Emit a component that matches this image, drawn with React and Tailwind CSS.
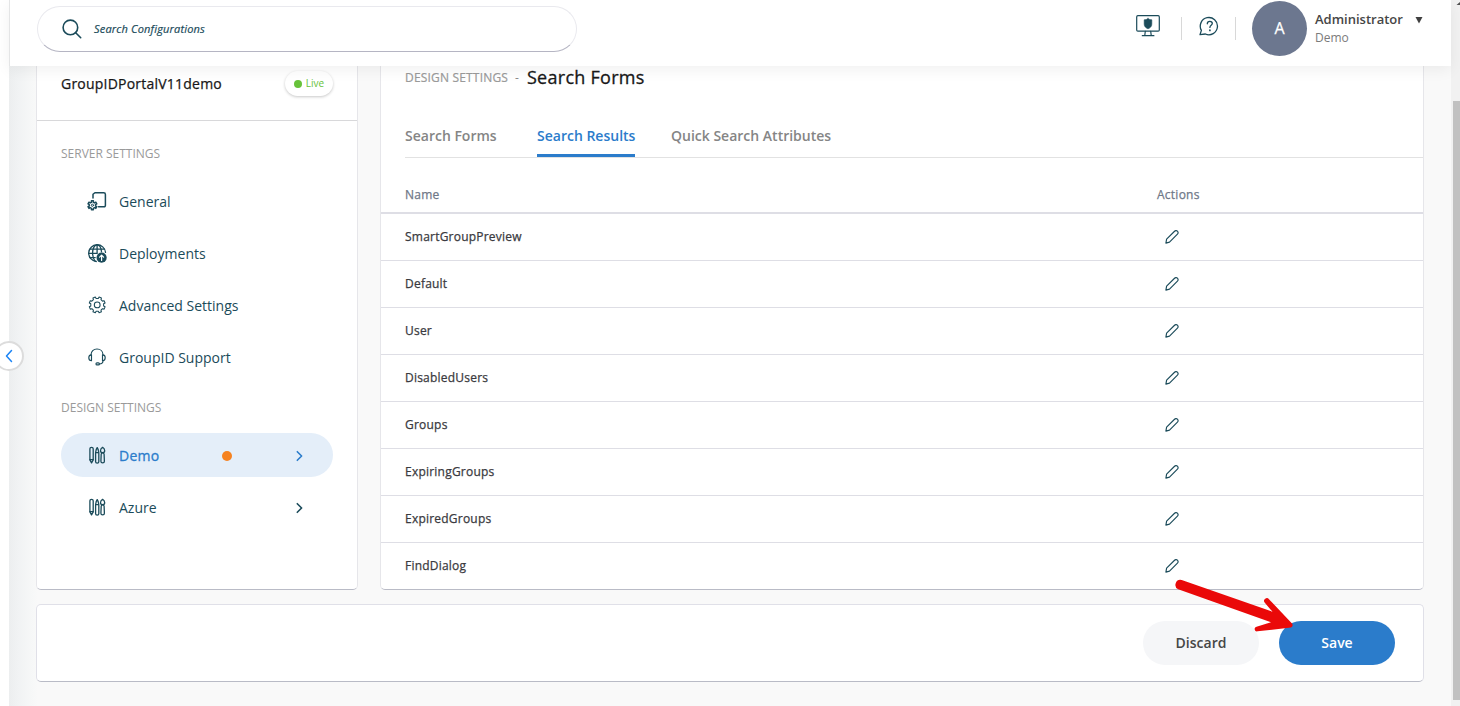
import React from "react";

const stroke = {
  fill: "none",
  stroke: "currentColor",
  strokeLinecap: "round",
  strokeLinejoin: "round",
};

// Closed outline of a cog: each tooth is four points, alternating outer and inner radius.
function cogPath(cx, cy, teeth, outer, inner, phase) {
  const step = 360 / teeth;
  const points = [];
  for (let i = 0; i < teeth; i++) {
    const mid = phase + i * step;
    [
      [-0.29, inner],
      [-0.2, outer],
      [0.2, outer],
      [0.29, inner],
    ].forEach(([offset, r]) => {
      const a = ((mid + offset * step) * Math.PI) / 180;
      points.push(`${(cx + r * Math.cos(a)).toFixed(2)} ${(cy + r * Math.sin(a)).toFixed(2)}`);
    });
  }
  return `M${points.join("L")}Z`;
}

const SMALL_COG = cogPath(5.4, 14.3, 6, 4.6, 3.2, 90);
const LARGE_COG = cogPath(10.2, 9.9, 8, 8.1, 6.5, 22.5);

function SearchIcon() {
  return (
    <svg width="20" height="20" viewBox="0 0 20 20" {...stroke} strokeWidth="1.6">
      <circle cx="8.4" cy="8.4" r="7.3" />
      <path d="M13.7 13.7l5 5" />
    </svg>
  );
}

function MonitorIcon() {
  return (
    <svg width="24" height="22" viewBox="0 0 24 22" {...stroke} strokeWidth="1.2">
      <rect x="0.7" y="0.7" width="22.6" height="15.4" rx="1.2" />
      <path d="M9.3 16.3l-.5 4M14.7 16.3l.5 4M6.3 20.7h11.6" />
      <path
        d="M12 3.6c1.100.8 2.300 1.200 3.800 1.200v4.300c0 2.400-1.600 3.900-3.800 4.700-2.200-.8-3.800-2.300-3.800-4.700V4.800c1.500 0 2.700-.4 3.800-1.200z"
        fill="currentColor"
        strokeWidth="0.6"
      />
    </svg>
  );
}

function HelpIcon() {
  return (
    <svg width="20" height="20" viewBox="0 0 20 20" {...stroke} strokeWidth="1.3">
      <path d="M1 18.600l1.400-4.200A8.600 8.600 0 1 1 6.400 18z" />
      <path d="M8.300 7.800c0-1.500 1-2.500 2.500-2.500s2.500.9 2.500 2.200c0 1.700-2.400 1.900-2.400 3.900" />
      <path d="M10.900 14.200v.3" strokeWidth="1.700" />
    </svg>
  );
}

function GeneralIcon() {
  return (
    <svg width="20" height="20" viewBox="0 0 20 20" {...stroke} strokeWidth="1.500">
      <path d="M6 7V3.300L7.900 1.700h8.800a1.700 1.700 0 0 1 1.700 1.700v11.200a1.200 1.200 0 0 1-1.200 1.200h-5.700" />
      <path d={SMALL_COG} />
      <circle cx="5.400" cy="14.300" r="1.100" strokeWidth="1" />
    </svg>
  );
}

function DeploymentsIcon() {
  return (
    <svg width="20" height="20" viewBox="-0.5 -0.4 20 20" {...stroke} strokeWidth="1.300">
      <path d="M8.800 18.100A8.400 8.400 0 1 1 18 9" />
      <path d="M7.700 18c-1.700-1.900-2.600-5-2.600-8.300 0-4.800 2-8.300 4.500-8.300 2.300 0 4 3 4.400 7" />
      <path d="M9.600 1.400v8.100M2.300 5.700h14.500M1.200 10h8.500M2.200 14.200h5.500" />
      <circle cx="14.100" cy="14.300" r="5.100" fill="currentColor" stroke="none" />
      <path d="M14.100 17v-5.100M12.100 13.700l2-2 2 2" stroke="white" strokeWidth="1.200" />
    </svg>
  );
}

function AdvancedIcon() {
  return (
    <svg width="20" height="20" viewBox="0 0 20 20" {...stroke} strokeWidth="1.050">
      <path d={LARGE_COG} />
      <circle cx="10.200" cy="9.900" r="2.900" />
    </svg>
  );
}

function SupportIcon() {
  return (
    <svg width="20" height="20" viewBox="0 0 20 20" {...stroke} strokeWidth="1.150">
      <path d="M4 8.300V7.800C4 4.400 6.600 2 10 2s6 2.400 6 5.800v.5" />
      <path d="M4.500 7.800c-1.800 0-2.700 1.200-2.700 2.900s.9 3 2.700 3zM15.500 7.800c1.800 0 2.700 1.200 2.700 2.900s-.9 3-2.700 3z" />
      <path d="M16 13.800c0 1.900-1.300 3.200-3.700 3.200" />
      <rect x="9" y="15.800" width="3.400" height="2.100" rx="1" />
    </svg>
  );
}

function DesignIcon() {
  return (
    <svg width="20" height="20" viewBox="-0.2 -0.4 20 20" {...stroke} strokeWidth="1.300">
      <path d="M2.700 3.300c0-1.900 3.300-1.900 3.300 0v11.200l-1.650 3-1.650-3z" />
      <path d="M2.800 14.300h3.100" />
      <path d="M8.400 7.500c0-1.500.6-2 .6-3.300L10 2.200l1 2c0 1.300.6 1.800.6 3.300v8.800c0 1.800-3.200 1.800-3.200 0zM8.400 7.300h3.200" />
      <path d="M15.400 1.900c1.500 1 2.100 2.100 2.100 3.400 0 1.100-.9 1.900-2.100 1.900s-2.100-.8-2.100-1.900c0-1.300.6-2.400 2.100-3.400z" />
      <path d="M14 8.900c0-1.900 2.900-1.900 2.900 0l.3 7c0 2.200-3.500 2.200-3.500 0z" />
    </svg>
  );
}

function PencilIcon() {
  return (
    <svg width="14" height="14" viewBox="0 0 14 14" {...stroke} strokeWidth="1.150">
      <path d="M.9 13.100l.7-3.900 7.700-7.700c1.100-1.100 2.300-1.100 3.100-.3s.9 2.100-.2 3.200l-7.700 7.700z" />
    </svg>
  );
}

function Chevron() {
  return (
    <svg className="mt-[2px]" width="8" height="12" viewBox="0.4 0 8 12" {...stroke} strokeWidth="1.600">
      <path d="M1.700 1.700L6 6l-4.300 4.300" />
    </svg>
  );
}

const serverItems = [
  { label: "General", Icon: GeneralIcon },
  { label: "Deployments", Icon: DeploymentsIcon },
  { label: "Advanced Settings", Icon: AdvancedIcon },
  { label: "GroupID Support", Icon: SupportIcon },
];

const rows = [
  "SmartGroupPreview",
  "Default",
  "User",
  "DisabledUsers",
  "Groups",
  "ExpiringGroups",
  "ExpiredGroups",
  "FindDialog",
];

function Header() {
  return (
    <header className="relative z-10 flex h-[66px] shrink-0 items-start border-l border-[#e4e5e6] bg-white pl-[27px] shadow-[0_4px_14px_rgba(0,0,0,0.06)]">
      <div className="mt-[6px] flex h-[46px] w-[540px] items-center rounded-full border border-[#e9e9ee] border-b-[#b5b5c3] pl-[24px] text-[#1b4b5a]">
        <SearchIcon />
        <span className="ml-3 text-[11px] tracking-[0.18px] italic [-webkit-text-stroke:0.2px]">Search Configurations</span>
      </div>
      <div className="ml-auto flex items-start pr-[28px] text-[#1b4b5a]">
        <div className="mt-[15px]"><MonitorIcon /></div>
        <div className="mt-[17px] ml-[21px] h-[23px] w-px bg-[#d8d8d8]" />
        <div className="mt-[16px] ml-[17px]"><HelpIcon /></div>
        <div className="mt-[17px] ml-[16px] h-[23px] w-px bg-[#d8d8d8]" />
        <div className="mt-px ml-[16px] flex size-[55px] items-center justify-center rounded-full bg-[#6c778f] pb-[2px] text-[16px] text-white [-webkit-text-stroke:0.25px]">
          A
        </div>
        <div className="mt-[10px] ml-[8px] w-[100px]">
          <div className="text-[13px] leading-[19px] font-semibold text-[#464646]">Administrator</div>
          <div className="text-[12px] leading-[18px] text-[#7b7b7b]">Demo</div>
        </div>
        <svg className="mt-[17px]" width="8" height="7" viewBox="0 0 8 7">
          <path d="M.5 0h7L4 6.500z" fill="#404040" />
        </svg>
      </div>
    </header>
  );
}

function Sidebar() {
  return (
    <aside className="w-[322px] shrink-0 rounded-b-[5px] border border-t-0 border-[#e6e6ea] border-b-[#b9bbc6] bg-white">
      <div className="flex h-[55px] items-start justify-between border-b border-[#d8d8da] pr-[24px] pl-[24px]">
        <span className="mt-[7px] text-[14px] leading-[22px] tracking-[0.22px] text-[#181818] [-webkit-text-stroke:0.25px]">GroupIDPortalV11demo</span>
        <span className="mt-[5px] flex h-[25px] w-[48px] items-center justify-center gap-1 rounded-full bg-white text-[10px] text-[#67c23a] shadow-[0_1px_3px_rgba(0,0,0,0.22)]">
          <i className="size-2 rounded-full bg-[#67c23a]" />
          Live
        </span>
      </div>
      <div className="px-[24px] pt-[24px] text-[#1b4b5a]">
        <h2 className="text-[12px] leading-[18px] text-[#9a9a9a]">SERVER SETTINGS</h2>
        <nav className="mt-[16px] flex flex-col gap-2">
          {serverItems.map(({ label, Icon }) => (
            <a key={label} className="flex h-[44px] items-center pl-[26px]">
              <Icon />
              <span className="ml-3 text-[14px]">{label}</span>
            </a>
          ))}
        </nav>
        <h2 className="mt-[20px] text-[12px] leading-[18px] text-[#9a9a9a]">DESIGN SETTINGS</h2>
        <nav className="mt-[16px] flex flex-col gap-2">
          <a className="flex h-[44px] items-center rounded-full bg-[#e4eef9] pl-[26px]">
            <DesignIcon />
            <span className="ml-3 w-[103px] text-[14px] tracking-[0.25px] text-[#2b7ccb] [-webkit-text-stroke:0.3px]">Demo</span>
            <i className="mt-[2px] size-[10px] rounded-full bg-[#f58220]" />
            <span className="mr-[29px] ml-auto text-[#2b7ccb]"><Chevron /></span>
          </a>
          <a className="flex h-[44px] items-center pl-[26px]">
            <DesignIcon />
            <span className="ml-3 text-[14px]">Azure</span>
            <span className="mr-[29px] ml-auto"><Chevron /></span>
          </a>
        </nav>
      </div>
    </aside>
  );
}

function Results() {
  return (
    <section className="flex-1 rounded-b-[5px] border border-t-0 border-[#e6e6ea] border-b-[#b9bbc6] bg-white">
      <div className="flex h-[49px] items-start pl-[24px] whitespace-pre">
        <span className="mt-[3px] text-[12px] leading-[18px] tracking-[0.18px] text-[#9a9a9a] [-webkit-text-stroke:0.2px]">DESIGN SETTINGS</span>
        <span className="mt-[3px] ml-[7px] text-[12px] leading-[18px] text-[#8a8a8a]">-</span>
        <h1 className="ml-[8px] text-[18px] leading-[23px] tracking-[0.28px] text-[#181818] [-webkit-text-stroke:0.3px]">Search Forms</h1>
      </div>
      <div className="ml-[24px] flex h-[43px] gap-[40px] border-b border-[#e2e2e2] text-[14px] font-semibold text-[#858585]">
        <span className="h-[42px] w-[92px] pt-[10px] leading-[22px] whitespace-nowrap">Search Forms</span>
        <span className="h-[42px] w-[98px] border-b-[3px] border-[#2b7ccb] pt-[10px] leading-[22px] whitespace-nowrap text-[#2b7ccb]">Search Results</span>
        <span className="-ml-1 h-[42px] pt-[10px] leading-[22px] whitespace-nowrap">Quick Search Attributes</span>
      </div>
      <div className="flex h-[56px] border-b-2 border-[#dedee5] pt-[28px] pl-[24px] text-[12px] leading-[18px] tracking-[0.25px] text-[#6f7888] [-webkit-text-stroke:0.25px]">
        <span className="w-[752px]">Name</span>
        <span>Actions</span>
      </div>
      {rows.map((r) => (
        <div
          key={r}
          className="flex h-[47px] items-center border-b border-[#dedee5] pl-[24px] text-[12px] tracking-[0.22px] text-[#3a3a40] last:h-[46px] last:border-b-0"
        >
          <span className="w-[760px] [-webkit-text-stroke:0.25px]">{r}</span>
          <span className="text-[#1b4b5a]"><PencilIcon /></span>
        </div>
      ))}
    </section>
  );
}

export default function App() {
  return (
    <div className="relative flex h-[706px] w-[1460px] overflow-hidden bg-white font-['Open_Sans','Noto_Sans',sans-serif]">
      <div className="w-[9px] shrink-0 bg-white" />
      <div className="flex w-[1442px] shrink-0 flex-col bg-[#f9f9f9]">
        <Header />
        <main className="flex flex-1 flex-col bg-[linear-gradient(to_right,#eceeef_0px,#f0f2f3_8px,#f7f8f8_24px,#f9f9f9_29px)] pr-[27px] pl-[27px]">
          <div className="flex h-[524px] shrink-0 gap-[22px]">
            <Sidebar />
            <Results />
          </div>
          <footer className="mt-[14px] flex h-[78px] items-center justify-end gap-5 rounded-[5px] border border-[#e0e0e8] border-b-[#b9bbc6] bg-white pr-[28px] text-[14px] font-semibold">
            <button className="h-[44px] w-[116px] rounded-full bg-[#f5f6f8] pb-[2px] text-[#464646]">Discard</button>
            <button className="h-[44px] w-[116px] rounded-full bg-[#2b7ccb] pb-[2px] text-white">Save</button>
          </footer>
        </main>
      </div>
      <div className="flex w-[9px] shrink-0 flex-col items-end bg-[#f1f1f1]">
        <svg width="4" height="6" viewBox="0 0 4 6">
          <path d="M4 2v3H.5z" fill="#505050" />
        </svg>
        <div className="mt-[95px] h-[599px] w-[7px] bg-[#c1c1c1]" />
      </div>
      <button className="absolute top-[341px] left-[-6px] z-20 flex size-[30px] items-center justify-center rounded-full border-2 border-[#dcdcdc] bg-white text-[#1b84f5]">
        <svg width="8" height="14" viewBox="0 0 8 14" {...stroke} strokeWidth="1.500">
          <path d="M6.500 1.500L1.500 7l5 5.500" />
        </svg>
      </button>
      <svg className="absolute top-[570px] left-[1165px] z-20" width="135" height="70" viewBox="0 0 135 70">
        <path
          d="M16.700 10L107.500 41.800L99.600 32.500A2.700 2.700 0 0 1 104 29.300L127 53.500A2.500 2.500 0 0 1 126 57.500L92.500 61.300A2.200 2.200 0 0 1 91.500 56.700L106 52.300L13.200 19.300A5 5 0 0 1 16.700 10Z"
          fill="#ea0909"
        />
      </svg>
    </div>
  );
}
